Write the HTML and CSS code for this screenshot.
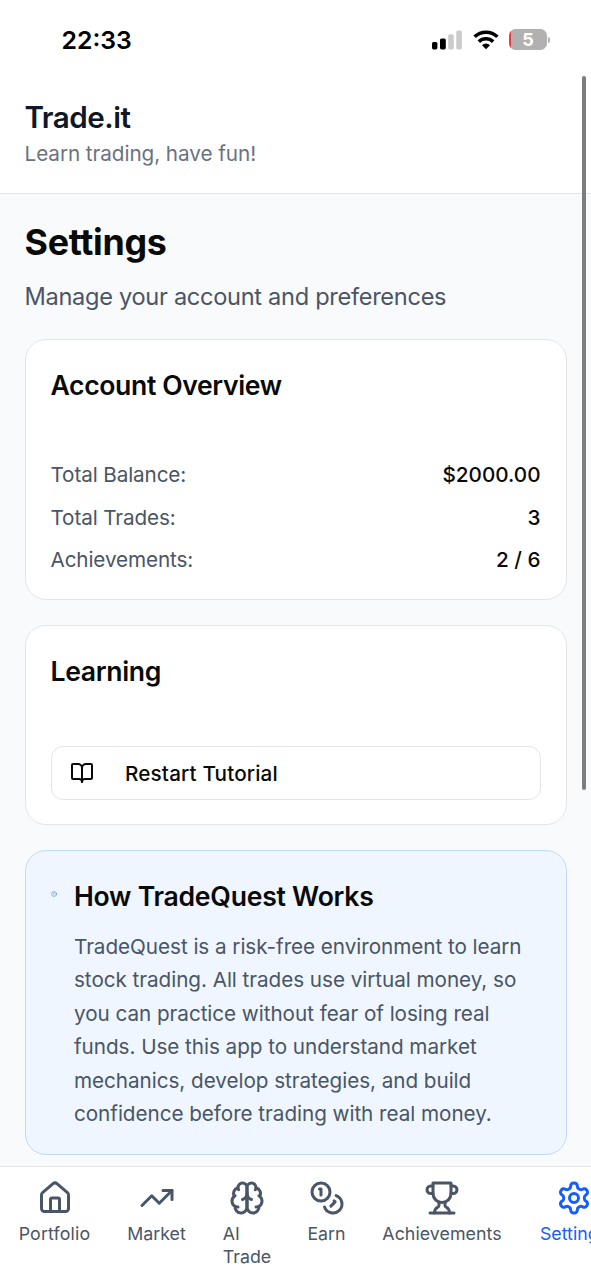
FILE: index.html
```html
<!DOCTYPE html>
<html lang="en">
<head>
<meta charset="utf-8">
<title>Trade.it</title>
<link rel="stylesheet" href="styles.css">
</head>
<body>
<div class="app">
  <div class="status">
    <span class="time">22:33</span>
    <div class="indicators">
      <svg class="signal" viewBox="0 0 30 20"><rect x="0" y="12" width="5.4" height="7.4" rx="1.6"/><rect x="8" y="8.5" width="5.8" height="10.9" rx="1.6"/><g fill="#cbcbcb"><rect x="16.2" y="4.3" width="5.6" height="15.1" rx="1.6"/><rect x="24.3" y="0.4" width="5.6" height="19" rx="1.6"/></g></svg>
      <svg class="wifi" viewBox="0 0 26 20"><g fill="none" stroke="#000" stroke-width="3.6"><path d="M1.6 6.8a16.4 16.4 0 0 1 22.8 0"/><path d="M5.8 11.6a10.5 10.5 0 0 1 14.4 0"/></g><path d="M13 19.2l-4-4a5.8 5.8 0 0 1 8 0z"/></svg>
      <div class="battery"><div class="cell">5</div><div class="cap"></div></div>
    </div>
  </div>
  <header class="header">
    <div class="brand">Trade.it</div>
    <div class="tagline">Learn trading, have fun!</div>
  </header>
  <main class="main">
    <h1 class="title">Settings</h1>
    <p class="subtitle">Manage your account and preferences</p>
    <section class="card">
      <h2 class="card-title overview">Account Overview</h2>
      <div class="rows">
        <div class="row"><span class="key">Total Balance:</span><span class="value">$2000.00</span></div>
        <div class="row"><span class="key">Total Trades:</span><span class="value">3</span></div>
        <div class="row"><span class="key">Achievements:</span><span class="value">2 / 6</span></div>
      </div>
    </section>
    <section class="card">
      <h2 class="card-title">Learning</h2>
      <button class="button">
        <svg class="icon book" viewBox="0 0 24 24"><path d="M12 7v14"/><path d="M3 18a1 1 0 0 1-1-1V4a1 1 0 0 1 1-1h5a4 4 0 0 1 4 4 4 4 0 0 1 4-4h5a1 1 0 0 1 1 1v13a1 1 0 0 1-1 1h-6a3 3 0 0 0-3 3 3 3 0 0 0-3-3z"/></svg>
        <span>Restart Tutorial</span>
      </button>
    </section>
    <section class="card info">
      <svg class="icon help" viewBox="0 0 24 24"><circle cx="12" cy="12" r="10"/><path d="M9.09 9a3 3 0 0 1 5.83 1c0 2-3 3-3 3"/><path d="M12 17h.01"/></svg>
      <div>
        <h2 class="card-title works">How TradeQuest Works</h2>
        <p class="copy">TradeQuest is a risk-free environment to learn<br>stock trading. All trades use virtual money, so<br>you can practice without fear of losing real<br>funds. Use this app to understand market<br>mechanics, develop strategies, and build<br>confidence before trading with real money.</p>
      </div>
    </section>
  </main>
  <nav class="nav">
    <a class="tab portfolio"><svg class="icon" viewBox="0 0 24 24"><path d="M15 21v-8a1 1 0 0 0-1-1h-4a1 1 0 0 0-1 1v8"/><path d="M3 10a2 2 0 0 1 .709-1.528l7-5.999a2 2 0 0 1 2.582 0l7 5.999A2 2 0 0 1 21 10v9a2 2 0 0 1-2 2H5a2 2 0 0 1-2-2z"/></svg><span>Portfolio</span></a>
    <a class="tab market"><svg class="icon" viewBox="0 0 24 24"><path d="M16 7h6v6"/><path d="m22 7-8.5 8.5-5-5L2 17"/></svg><span>Market</span></a>
    <a class="tab ai"><svg class="icon" viewBox="0 0 24 24"><path d="M12 5a3 3 0 1 0-5.997.125 4 4 0 0 0-2.526 5.77 4 4 0 0 0 .556 6.588A4 4 0 1 0 12 18Z"/><path d="M12 5a3 3 0 1 1 5.997.125 4 4 0 0 1 2.526 5.77 4 4 0 0 1-.556 6.588A4 4 0 1 1 12 18Z"/><path d="M15 13a4.5 4.5 0 0 1-3-4 4.5 4.5 0 0 1-3 4"/><path d="M17.599 6.5a3 3 0 0 0 .399-1.375"/><path d="M6.003 5.125A3 3 0 0 0 6.401 6.5"/><path d="M3.477 10.896a4 4 0 0 1 .585-.396"/><path d="M19.938 10.5a4 4 0 0 1 .585.396"/><path d="M6 18a4 4 0 0 1-1.967-.516"/><path d="M19.967 17.484A4 4 0 0 1 18 18"/></svg><span>AI<br>Trade</span></a>
    <a class="tab earn"><svg class="icon" viewBox="0 0 24 24"><circle cx="8" cy="8" r="6"/><path d="M18.09 10.37A6 6 0 1 1 10.34 18"/><path d="M7 6h1v4"/><path d="m16.71 13.88.7.71-2.82 2.82"/></svg><span>Earn</span></a>
    <a class="tab awards"><svg class="icon" viewBox="0 0 24 24"><path d="M6 9H4.5a2.5 2.5 0 0 1 0-5H6"/><path d="M18 9h1.5a2.5 2.5 0 0 0 0-5H18"/><path d="M4 22h16"/><path d="M10 14.66V17c0 .55-.47.98-.97 1.21C7.85 18.75 7 20.24 7 22"/><path d="M14 14.66V17c0 .55.47.98.97 1.21C16.15 18.75 17 20.24 17 22"/><path d="M18 2H6v7a6 6 0 0 0 12 0V2Z"/></svg><span>Achievements</span></a>
    <a class="tab settings"><svg class="icon" viewBox="0 0 24 24"><path d="M12.22 2h-.44a2 2 0 0 0-2 2v.18a2 2 0 0 1-1 1.73l-.43.25a2 2 0 0 1-2 0l-.15-.08a2 2 0 0 0-2.73.73l-.22.38a2 2 0 0 0 .73 2.73l.15.1a2 2 0 0 1 1 1.72v.51a2 2 0 0 1-1 1.74l-.15.09a2 2 0 0 0-.73 2.73l.22.38a2 2 0 0 0 2.73.73l.15-.08a2 2 0 0 1 2 0l.43.25a2 2 0 0 1 1 1.73V20a2 2 0 0 0 2 2h.44a2 2 0 0 0 2-2v-.18a2 2 0 0 1 1-1.73l.43-.25a2 2 0 0 1 2 0l.15.08a2 2 0 0 0 2.73-.73l.22-.39a2 2 0 0 0-.73-2.73l-.15-.08a2 2 0 0 1-1-1.74v-.5a2 2 0 0 1 1-1.74l.15-.09a2 2 0 0 0 .73-2.73l-.22-.38a2 2 0 0 0-2.73-.73l-.15.08a2 2 0 0 1-2 0l-.43-.25a2 2 0 0 1-1-1.73V4a2 2 0 0 0-2-2z"/><circle cx="12" cy="12" r="3"/></svg><span>Settings</span></a>
  </nav>
  <div class="scrollbar"></div>
</div>
</body>
</html>
```
FILE: styles.css
```css
* { box-sizing: border-box; }
body { margin: 0; font-family: Inter, "Liberation Sans", sans-serif; color: #0a0a0a; background: #fff; }
h1, h2, p { margin: 0; }
.app { position: relative; display: flex; flex-direction: column; width: 591px; height: 1280px; overflow: hidden; }
.icon { display: block; flex: none; fill: none; stroke: currentColor; stroke-width: 2; stroke-linecap: round; stroke-linejoin: round; }

.status { flex: none; height: 72px; padding: 7px 41px 0 61.5px; display: flex; justify-content: space-between; align-items: center; }
.time { font-size: 24.8px; font-weight: 600; color: #000; }
.indicators { display: flex; align-items: center; }
.signal { width: 30px; height: 20px; margin-right: 11px; }
.wifi { width: 26px; height: 20px; margin-right: 10px; }
.battery { display: flex; align-items: center; gap: 1px; }
.cell { width: 38px; height: 21px; border-radius: 6.5px; background: linear-gradient(90deg, #ec3b45 2.5px, #b1b1b1 2.5px); color: #fff; font-size: 18px; font-weight: 700; line-height: 22px; text-align: center; }
.cap { width: 2px; height: 6px; border-radius: 0 2px 2px 0; background: #b1b1b1; }

.header { flex: none; height: 122px; padding: 24px 24.5px 0; border-bottom: 1.5px solid #e5e7eb; }
.brand { font-size: 29.6px; font-weight: 600; line-height: 43px; letter-spacing: -0.5px; color: #101828; }
.tagline { font-size: 20.7px; line-height: 30px; letter-spacing: -0.06px; color: #6a7282; }

.main { flex: 1; min-height: 0; padding: 24px 24.5px 0; overflow: hidden; background: #f9fafb; }
.title { font-size: 35.8px; font-weight: 700; line-height: 49px; letter-spacing: -0.3px; }
.subtitle { margin: 12px 0 24px; font-size: 23.6px; line-height: 36px; letter-spacing: -0.3px; color: #4a5565; }
.card { margin-bottom: 25px; padding: 24px 25px; border: 1.5px solid #e5e5e5; border-radius: 21px; background: #fff; width: 542px; }
.card-title { font-size: 26.6px; font-weight: 600; line-height: 42px; letter-spacing: -0.35px; }
.overview { letter-spacing: -0.38px; }
.rows { display: flex; flex-direction: column; gap: 12.5px; margin-top: 54px; }
.row { display: flex; justify-content: space-between; font-size: 20.7px; line-height: 30px; }
.key { color: #4a5565; letter-spacing: -0.12px; }
.value { font-weight: 500; }
.button { display: flex; align-items: center; gap: 31px; width: 490px; height: 54px; margin-top: 54px; padding: 0 18.5px; border: 1.5px solid #e5e5e5; border-radius: 12px; background: #fff; color: #0a0a0a; font: 500 20.7px Inter, sans-serif; letter-spacing: 0.15px; }
.book { width: 24px; height: 24px; }
.info { display: flex; gap: 17.5px; background: #eff6ff; border-color: #bedbff; }
.help { width: 6px; height: 6px; margin-top: 16px; color: #2b7fff; }
.works { line-height: 43px; letter-spacing: -0.25px; }
.copy { margin-top: 12px; font-size: 20.7px; line-height: 33.4px; letter-spacing: -0.05px; color: #4a5565; white-space: nowrap; }

.nav { flex: none; height: 114px; display: flex; align-items: flex-start; overflow: hidden; padding-top: 13px; border-top: 1.5px solid #e5e7eb; background: #fff; }
.tab { flex: none; display: flex; flex-direction: column; align-items: center; gap: 6px; color: #4a5565; font-size: 17.8px; line-height: 23px; }
.tab .icon { width: 36px; height: 36px; }
.portfolio { width: 109px; letter-spacing: 0.15px; }
.market { width: 95px; }
.ai { width: 86px; }
.earn { width: 73px; }
.awards { width: 158px; letter-spacing: 0.05px; }
.settings { width: 106px; color: #155dfc; }

.scrollbar { position: absolute; top: 76px; left: 582px; width: 4px; height: 714px; border-radius: 2px; background: #7c7d7f; }
```
